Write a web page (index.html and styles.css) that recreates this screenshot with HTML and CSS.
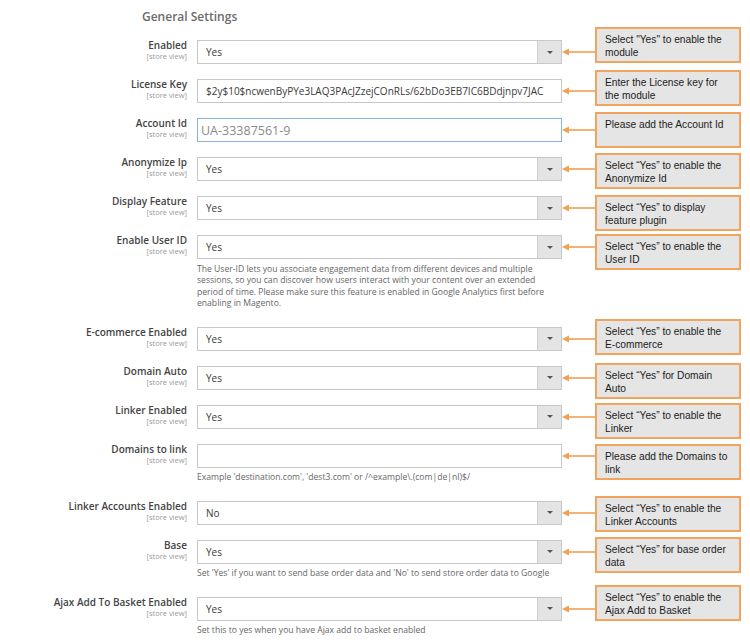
FILE: index.html
```html
<!DOCTYPE html>
<html>
<head>
<meta charset="utf-8">
<link rel="stylesheet" href="styles.css">
</head>
<body>
<div class="page">
  <h2 class="title">General Settings</h2>

  <div class="row">
    <div class="label"><span class="name">Enabled</span><span class="scope">[store view]</span></div>
    <div class="control"><div class="select"><span class="value">Yes</span><span class="btn"><i class="caret"></i></span></div></div>
    <svg class="arrow" viewBox="0 0 33 24"><line x1="5" y1="12" x2="33" y2="12"/><polygon points="0,12 7,8.5 7,15.5"/></svg>
    <div class="callout up13">Select "Yes" to enable the module</div>
  </div>

  <div class="row">
    <div class="label"><span class="name">License Key</span><span class="scope">[store view]</span></div>
    <div class="control"><div class="input"><span class="value">$2y$10$ncwenByPYe3LAQ3PAcJZzejCOnRLs/62bDo3EB7IC6BDdjnpv7JAC</span></div></div>
    <svg class="arrow" viewBox="0 0 33 24"><line x1="5" y1="12" x2="33" y2="12"/><polygon points="0,12 7,8.5 7,15.5"/></svg>
    <div class="callout up9">Enter the License key for the module</div>
  </div>

  <div class="row">
    <div class="label"><span class="name">Account Id</span><span class="scope">[store view]</span></div>
    <div class="control"><div class="input focus"><span class="value big">UA-33387561-9</span></div></div>
    <svg class="arrow" viewBox="0 0 33 24"><line x1="5" y1="12" x2="33" y2="12"/><polygon points="0,12 7,8.5 7,15.5"/></svg>
    <div class="callout up6">Please add the Account Id</div>
  </div>

  <div class="row">
    <div class="label"><span class="name">Anonymize Ip</span><span class="scope">[store view]</span></div>
    <div class="control"><div class="select"><span class="value">Yes</span><span class="btn"><i class="caret"></i></span></div></div>
    <svg class="arrow" viewBox="0 0 33 24"><line x1="5" y1="12" x2="33" y2="12"/><polygon points="0,12 7,8.5 7,15.5"/></svg>
    <div class="callout up4">Select “Yes” to enable the Anonymize Id</div>
  </div>

  <div class="row">
    <div class="label"><span class="name">Display Feature</span><span class="scope">[store view]</span></div>
    <div class="control"><div class="select"><span class="value">Yes</span><span class="btn"><i class="caret"></i></span></div></div>
    <svg class="arrow" viewBox="0 0 33 24"><line x1="5" y1="12" x2="33" y2="12"/><polygon points="0,12 7,8.5 7,15.5"/></svg>
    <div class="callout up1">Select “Yes” to display feature plugin</div>
  </div>

  <div class="row with-note">
    <div class="label"><span class="name">Enable User ID</span><span class="scope">[store view]</span></div>
    <div class="control"><div class="select"><span class="value">Yes</span><span class="btn"><i class="caret"></i></span></div>
      <p class="note">The User-ID lets you associate engagement data from different devices and multiple<br>sessions, so you can discover how users interact with your content over an extended<br>period of time. Please make sure this feature is enabled in Google Analytics first before<br>enabling in Magento.</p></div>
    <svg class="arrow" viewBox="0 0 33 24"><line x1="5" y1="12" x2="33" y2="12"/><polygon points="0,12 7,8.5 7,15.5"/></svg>
    <div class="callout up1">Select “Yes” to enable the User ID</div>
  </div>

  <div class="row">
    <div class="label"><span class="name">E-commerce Enabled</span><span class="scope">[store view]</span></div>
    <div class="control"><div class="select"><span class="value">Yes</span><span class="btn"><i class="caret"></i></span></div></div>
    <svg class="arrow" viewBox="0 0 33 24"><line x1="5" y1="12" x2="33" y2="12"/><polygon points="0,12 7,8.5 7,15.5"/></svg>
    <div class="callout up8">Select “Yes” to enable the E-commerce</div>
  </div>

  <div class="row">
    <div class="label"><span class="name">Domain Auto</span><span class="scope">[store view]</span></div>
    <div class="control"><div class="select"><span class="value">Yes</span><span class="btn"><i class="caret"></i></span></div></div>
    <svg class="arrow" viewBox="0 0 33 24"><line x1="5" y1="12" x2="33" y2="12"/><polygon points="0,12 7,8.5 7,15.5"/></svg>
    <div class="callout up3">Select “Yes” for Domain Auto</div>
  </div>

  <div class="row">
    <div class="label"><span class="name">Linker Enabled</span><span class="scope">[store view]</span></div>
    <div class="control"><div class="select"><span class="value">Yes</span><span class="btn"><i class="caret"></i></span></div></div>
    <svg class="arrow" viewBox="0 0 33 24"><line x1="5" y1="12" x2="33" y2="12"/><polygon points="0,12 7,8.5 7,15.5"/></svg>
    <div class="callout up2">Select “Yes” to enable the Linker</div>
  </div>

  <div class="row with-note">
    <div class="label"><span class="name">Domains to link</span><span class="scope">[store view]</span></div>
    <div class="control"><div class="input"></div>
      <p class="note">Example 'destination.com', 'dest3.com' or /^example\.(com|de|nl)$/</p></div>
    <svg class="arrow" viewBox="0 0 33 24"><line x1="5" y1="12" x2="33" y2="12"/><polygon points="0,12 7,8.5 7,15.5"/></svg>
    <div class="callout up0">Please add the Domains to link</div>
  </div>

  <div class="row">
    <div class="label"><span class="name">Linker Accounts Enabled</span><span class="scope">[store view]</span></div>
    <div class="control"><div class="select"><span class="value">No</span><span class="btn"><i class="caret"></i></span></div></div>
    <svg class="arrow" viewBox="0 0 33 24"><line x1="5" y1="12" x2="33" y2="12"/><polygon points="0,12 7,8.5 7,15.5"/></svg>
    <div class="callout up5">Select “Yes” to enable the Linker Accounts</div>
  </div>

  <div class="row with-note">
    <div class="label"><span class="name">Base</span><span class="scope">[store view]</span></div>
    <div class="control"><div class="select"><span class="value">Yes</span><span class="btn"><i class="caret"></i></span></div>
      <p class="note">Set 'Yes' if you want to send base order data and 'No' to send store order data to Google</p></div>
    <svg class="arrow" viewBox="0 0 33 24"><line x1="5" y1="12" x2="33" y2="12"/><polygon points="0,12 7,8.5 7,15.5"/></svg>
    <div class="callout up3">Select “Yes” for base order data</div>
  </div>

  <div class="row with-note">
    <div class="label"><span class="name">Ajax Add To Basket Enabled</span><span class="scope">[store view]</span></div>
    <div class="control"><div class="select"><span class="value">Yes</span><span class="btn"><i class="caret"></i></span></div>
      <p class="note">Set this to yes when you have Ajax add to basket enabled</p></div>
    <svg class="arrow" viewBox="0 0 33 24"><line x1="5" y1="12" x2="33" y2="12"/><polygon points="0,12 7,8.5 7,15.5"/></svg>
    <div class="callout up12">Select “Yes” to enable the Ajax Add to Basket</div>
  </div>
</div>
</body>
</html>
```
FILE: styles.css
```css
html, body {
  margin: 0;
  padding: 0;
  background: #ffffff;
}
body {
  font-family: "Open Sans", "Liberation Sans", sans-serif;
  color: #333333;
}
.page {
  padding-top: 9px;
}
.title {
  margin: 0 0 15px 142px;
  font-size: 12px;
  line-height: 16px;
  font-weight: 600;
  color: #6b6b6b;
}
.row {
  display: grid;
  grid-template-columns: 197px 365px 33px 146px;
  align-items: start;
  margin-bottom: 15px;
}
.row.with-note {
  margin-bottom: 17px;
}
.label {
  display: flex;
  flex-direction: column;
  align-items: flex-end;
  padding-right: 10px;
}
.name {
  font-size: 10px;
  line-height: 11px;
  font-weight: 600;
  color: #444444;
  white-space: nowrap;
}
.scope {
  font-size: 7.5px;
  line-height: 11px;
  color: #9a9a9a;
  white-space: nowrap;
}
.control {
  display: flex;
  flex-direction: column;
}
.select, .input {
  box-sizing: border-box;
  height: 24px;
  border: 1px solid #c8c8c8;
  background: #ffffff;
  display: flex;
  align-items: center;
}
.input.focus {
  border-color: #86b3e6;
}
.value {
  flex: 1;
  padding-left: 8px;
  font-size: 10px;
  color: #3a3a3a;
  white-space: nowrap;
  overflow: hidden;
}
.value.big {
  padding-left: 3px;
  font-size: 12.5px;
  color: #8a8a8a;
}
.btn {
  box-sizing: border-box;
  width: 24px;
  align-self: stretch;
  background: #e4e4e4;
  border-left: 1px solid #cfcfcf;
  display: flex;
  align-items: center;
  justify-content: center;
}
.caret {
  width: 0;
  height: 0;
  border-left: 3px solid transparent;
  border-right: 3px solid transparent;
  border-top: 3.5px solid #555555;
}
.note {
  margin: 4.5px 0 0 0;
  font-size: 8.6px;
  line-height: 11.5px;
  color: #666666;
  white-space: nowrap;
}
.arrow {
  width: 33px;
  height: 24px;
  display: block;
}
.arrow line {
  stroke: #f2a052;
  stroke-width: 1.6;
}
.arrow polygon {
  fill: #f2a052;
}
.callout {
  box-sizing: border-box;
  height: 36px;
  margin-bottom: -24px;
  border: 2px solid #f2a35c;
  background: #e5e5e5;
  padding: 4px 8px 0 8px;
  font-family: "Liberation Sans", Arial, sans-serif;
  font-size: 10.2px;
  line-height: 13px;
  color: #1c1c1c;
}
.up0 { margin-top: 0; }
.up1 { margin-top: -1px; }
.up2 { margin-top: -2px; }
.up3 { margin-top: -3px; }
.up4 { margin-top: -4px; }
.up5 { margin-top: -5px; }
.up6 { margin-top: -6px; }
.up8 { margin-top: -8px; }
.up9 { margin-top: -9px; }
.up12 { margin-top: -12px; }
.up13 { margin-top: -13px; }
```
